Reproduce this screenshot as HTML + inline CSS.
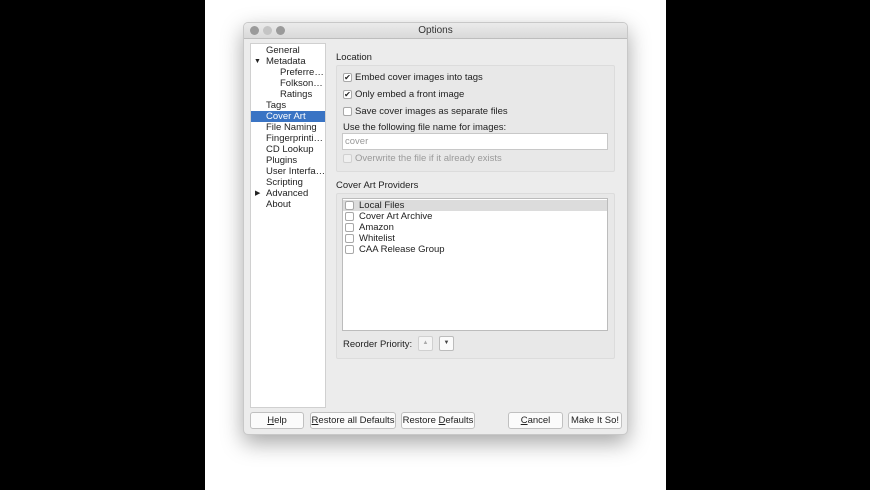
<!DOCTYPE html>
<html><head><meta charset="utf-8"><style>
*{margin:0;padding:0;box-sizing:border-box}
body{width:870px;height:490px;background:#fff;position:relative;overflow:hidden;font-family:"Liberation Sans",sans-serif;font-size:9.5px;color:#222}
.a{position:absolute}
.bk{background:#000;top:0;height:490px}
.win{left:243px;top:22px;width:385px;height:413px;background:#ececec;border:1px solid #c8c8c8;border-radius:5px;box-shadow:0 8px 22px rgba(0,0,0,.35);overflow:hidden}
.tb{left:0;top:0;width:100%;height:16px;background:linear-gradient(#ebebeb,#d9d9d9);border-bottom:1px solid #bdbdbd;text-align:center;line-height:16px;font-size:10px;color:#333}
.dot{width:9px;height:9px;border-radius:50%;background:#9a9a9a;top:3px}
.t{position:absolute;white-space:nowrap;line-height:11px}
.cb{position:absolute;width:9px;height:9px;border:1px solid #a8a8a8;background:#fff;border-radius:2px;font-size:8px;line-height:8px;text-align:center}
.btn{position:absolute;height:17px;top:389px;background:#fbfbfb;border:1px solid #c0c0c0;border-radius:3px;text-align:center;line-height:15px;font-size:9.5px}
.grp{position:absolute;border:1px solid #dcdcdc;background:#e8e8e8;border-radius:2px}
</style></head><body>
<div class="a bk" style="left:0;width:205px"></div>
<div class="a bk" style="left:666px;width:204px"></div>
<div class="a win">
 <div class="a tb">Options</div>
 <div class="a dot" style="left:6px"></div>
 <div class="a dot" style="left:19px;background:#c4c4c4"></div>
 <div class="a dot" style="left:32px"></div>
 <!-- sidebar -->
 <div class="a" style="left:6px;top:20px;width:76px;height:365px;background:#fff;border:1px solid #d0d0d0"></div>
 <div class="t" style="left:22px;top:22px">General</div>
 <div class="t" style="left:10px;top:33px;font-size:7px">▼</div>
 <div class="t" style="left:22px;top:33px">Metadata</div>
 <div class="t" style="left:36px;top:44px">Preferre…</div>
 <div class="t" style="left:36px;top:55px">Folkson…</div>
 <div class="t" style="left:36px;top:66px">Ratings</div>
 <div class="t" style="left:22px;top:77px">Tags</div>
 <div class="a" style="left:7px;top:88px;width:74px;height:11px;background:#3a74c4"></div>
 <div class="t" style="left:22px;top:88px;color:#fff">Cover Art</div>
 <div class="t" style="left:22px;top:99px">File Naming</div>
 <div class="t" style="left:22px;top:110px">Fingerprinti…</div>
 <div class="t" style="left:22px;top:121px">CD Lookup</div>
 <div class="t" style="left:22px;top:132px">Plugins</div>
 <div class="t" style="left:22px;top:143px">User Interfa…</div>
 <div class="t" style="left:22px;top:154px">Scripting</div>
 <div class="t" style="left:11px;top:165px;font-size:7px">▶</div>
 <div class="t" style="left:22px;top:165px">Advanced</div>
 <div class="t" style="left:22px;top:176px">About</div>
 <!-- location -->
 <div class="t" style="left:92px;top:29px">Location</div>
 <div class="grp" style="left:92px;top:42px;width:279px;height:107px"></div>
 <div class="cb" style="left:99px;top:50px">✔</div><div class="t" style="left:111px;top:49px">Embed cover images into tags</div>
 <div class="cb" style="left:99px;top:67px">✔</div><div class="t" style="left:111px;top:66px">Only embed a front image</div>
 <div class="cb" style="left:99px;top:84px"></div><div class="t" style="left:111px;top:83px">Save cover images as separate files</div>
 <div class="t" style="left:99px;top:99px">Use the following file name for images:</div>
 <div class="a" style="left:98px;top:110px;width:266px;height:17px;background:#fff;border:1px solid #c8c8c8"></div>
 <div class="t" style="left:101px;top:113px;color:#999">cover</div>
 <div class="cb" style="left:99px;top:131px;border-color:#d0d0d0;background:#f0f0f0"></div><div class="t" style="left:111px;top:130px;color:#9a9a9a">Overwrite the file if it already exists</div>
 <!-- providers -->
 <div class="t" style="left:92px;top:157px">Cover Art Providers</div>
 <div class="grp" style="left:92px;top:170px;width:279px;height:166px"></div>
 <div class="a" style="left:98px;top:175px;width:266px;height:133px;background:#fff;border:1px solid #bcbcbc"></div>
 <div class="a" style="left:99px;top:177px;width:264px;height:11px;background:#dcdcdc"></div>
 <div class="cb" style="left:101px;top:178px"></div><div class="t" style="left:115px;top:177px">Local Files</div>
 <div class="cb" style="left:101px;top:189px"></div><div class="t" style="left:115px;top:188px">Cover Art Archive</div>
 <div class="cb" style="left:101px;top:200px"></div><div class="t" style="left:115px;top:199px">Amazon</div>
 <div class="cb" style="left:101px;top:211px"></div><div class="t" style="left:115px;top:210px">Whitelist</div>
 <div class="cb" style="left:101px;top:222px"></div><div class="t" style="left:115px;top:221px">CAA Release Group</div>
 <div class="t" style="left:99px;top:316px">Reorder Priority:</div>
 <div class="a" style="left:174px;top:313px;width:15px;height:15px;background:#f4f4f4;border:1px solid #d0d0d0;border-radius:2px;font-size:6px;text-align:center;line-height:13px;color:#aaa">▲</div>
 <div class="a" style="left:195px;top:313px;width:15px;height:15px;background:#fbfbfb;border:1px solid #bcbcbc;border-radius:2px;font-size:6px;text-align:center;line-height:13px;color:#444">▼</div>
 <!-- buttons -->
 <div class="btn" style="left:6px;width:54px"><u>H</u>elp</div>
 <div class="btn" style="left:66px;width:86px"><u>R</u>estore all Defaults</div>
 <div class="btn" style="left:157px;width:74px">Restore <u>D</u>efaults</div>
 <div class="btn" style="left:264px;width:55px"><u>C</u>ancel</div>
 <div class="btn" style="left:324px;width:54px">Make It So!</div>
</div>
</body></html>
